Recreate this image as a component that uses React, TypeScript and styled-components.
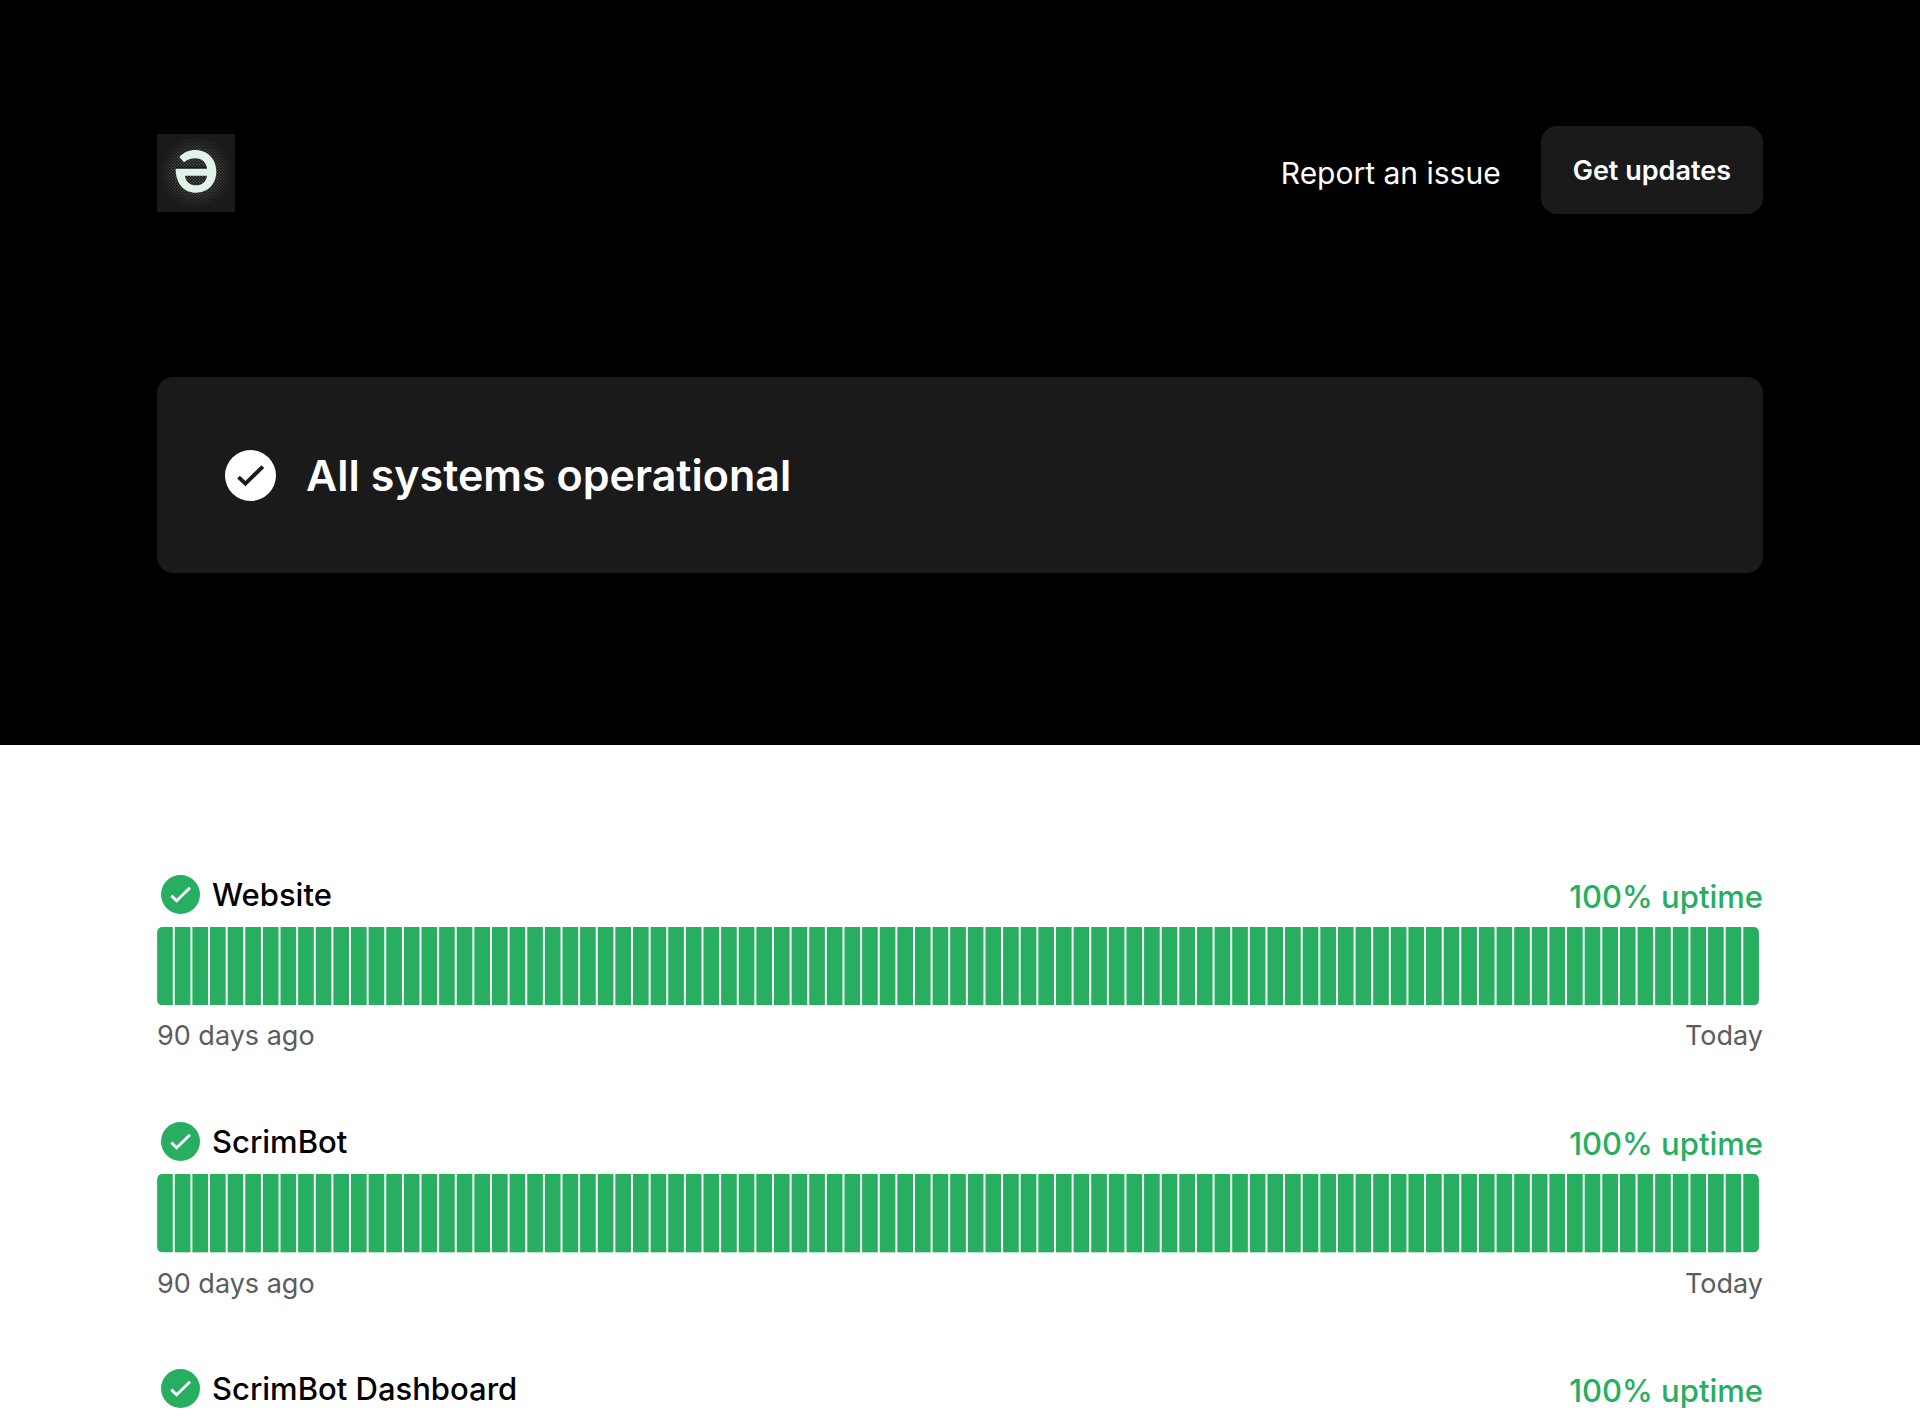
import React from "react";
import styled, { createGlobalStyle } from "styled-components";

const GlobalStyle = createGlobalStyle`
  *, *::before, *::after { box-sizing: border-box; }
  body {
    margin: 0;
    background: #fff;
    color: #000;
    font-family: Inter, "Liberation Sans", sans-serif;
    font-size: 30px;
  }
`;

const Container = styled.div`
  width: 100%;
  max-width: 1654px;
  margin: 0 auto;
  padding: 0 24px;
`;

const Hero = styled.header`
  background: #000;
  color: #fff;
  padding: 126px 0 172px;
`;

const TopBar = styled.div`
  display: flex;
  align-items: center;
  justify-content: space-between;
  margin-bottom: 163px;
`;

const HomeLink = styled.a`
  display: block;
  padding-top: 6px;

  svg { display: block; }
`;

const Actions = styled.nav`
  display: flex;
  align-items: center;
  gap: 40px;
`;

const ReportLink = styled.a`
  padding-top: 6px;
  color: #fff;
  text-decoration: none;
  line-height: 40px;
`;

const UpdatesButton = styled.button`
  height: 88px;
  padding: 0 32px;
  border: 0;
  border-radius: 16px;
  background: #1a1a1a;
  color: #fff;
  font: inherit;
  font-size: 27px;
  font-weight: 600;
  cursor: pointer;
`;

const StatusCard = styled.section`
  display: flex;
  align-items: center;
  gap: 30px;
  min-height: 196px;
  padding: 0 68px;
  border-radius: 16px;
  background: #1a1a1a;
`;

const StatusTitle = styled.h1`
  margin: 0;
  font-size: 43px;
  font-weight: 600;
  line-height: 56px;
`;

const Services = styled.main`
  padding-top: 129px;
`;

const ServiceList = styled.div`
  display: flex;
  flex-direction: column;
  gap: 66px;
`;

const ServiceHead = styled.div`
  display: flex;
  align-items: center;
  justify-content: space-between;
  height: 40px;
`;

const ServiceName = styled.h2`
  display: flex;
  align-items: center;
  gap: 12px;
  margin: 0;
  padding-left: 4px;
  font-size: 31px;
  font-weight: 500;
`;

const Uptime = styled.span`
  padding-top: 4px;
  color: #27ae60;
  font-size: 31px;
  font-weight: 500;
`;

const Chart = styled.svg`
  display: block;
  width: 100%;
  height: auto;
  margin-top: 13px;
`;

const Range = styled.div`
  display: flex;
  justify-content: space-between;
  margin-top: 12px;
  color: #5c5c5c;
  font-size: 27px;
  line-height: 38px;
`;

function Logo() {
  return (
    <svg width="78" height="78" viewBox="0 0 234 234" role="img" aria-label="Home">
      <defs>
        <pattern id="dots" width="9" height="9" patternUnits="userSpaceOnUse">
          <circle cx="2" cy="2" r="2" fill="#757575" />
          <circle cx="6.5" cy="6.5" r="2" fill="#757575" />
        </pattern>
        <radialGradient id="fade">
          <stop offset="0" stopColor="#fff" />
          <stop offset="0.6" stopColor="#fff" stopOpacity="0.75" />
          <stop offset="1" stopColor="#fff" stopOpacity="0" />
        </radialGradient>
        <mask id="glow">
          <circle cx="117" cy="115" r="108" fill="url(#fade)" />
        </mask>
      </defs>
      <rect width="234" height="234" fill="#1a1a1a" />
      <rect width="234" height="234" fill="url(#dots)" mask="url(#glow)" />
      <rect x="56" y="98" width="96" height="7" fill="#1a1a1a" />
      <path
        d="M67 69 C80 55 96 48 115 48 C152 48 178 76 178 112 C178 150 153 176 117 176 C82 176 56 150 56 104 H150 C148 84 134 73 115 73 C101 73 91 77 81 85 Z M84 125 C86 143 99 154 117 154 C135 154 148 143 150 125 Z"
        fill="#e1f2e8"
        fillRule="evenodd"
      />
    </svg>
  );
}

function CheckBadge({ size, fill, mark }: { size: number; fill: string; mark: string }) {
  return (
    <svg width={size} height={size} viewBox="0 0 40 40" aria-hidden="true">
      <circle cx="20" cy="20" r="20" fill={fill} />
      <path d="M10.6 21.2 L16 26.4 L29.7 13" fill="none" stroke={mark} strokeWidth="3" />
    </svg>
  );
}

const DAYS = 91;

const services = [
  { name: "Website", uptime: 100, history: true },
  { name: "ScrimBot", uptime: 100, history: true },
  { name: "ScrimBot Dashboard", uptime: 100, history: false },
];

function UptimeChart({ name }: { name: string }) {
  return (
    <Chart viewBox="0 0 820 40" role="img" aria-label={`${name} uptime history`}>
      {Array.from({ length: DAYS }, (_, day) => {
        if (day === 0) {
          return <path key={day} d="M8 0 H3 Q0 0 0 3 V37 Q0 40 3 40 H8 Z" fill="#27ae60" />;
        }
        if (day === DAYS - 1) {
          return <path key={day} d="M810 0 H815 Q818 0 818 3 V37 Q818 40 815 40 H810 Z" fill="#27ae60" />;
        }
        return <rect key={day} x={day * 9} width="8" height="40" fill="#27ae60" />;
      })}
    </Chart>
  );
}

export default function App() {
  return (
    <>
      <GlobalStyle />
      <Hero>
        <Container>
          <TopBar>
            <HomeLink href="#">
              <Logo />
            </HomeLink>
            <Actions>
              <ReportLink href="#report">Report an issue</ReportLink>
              <UpdatesButton type="button">Get updates</UpdatesButton>
            </Actions>
          </TopBar>
          <StatusCard>
            <CheckBadge size={51} fill="#fff" mark="#1a1a1a" />
            <StatusTitle>All systems operational</StatusTitle>
          </StatusCard>
        </Container>
      </Hero>
      <Services>
        <Container>
          <ServiceList>
            {services.map(({ name, uptime, history }) => (
              <section key={name}>
                <ServiceHead>
                  <ServiceName>
                    <CheckBadge size={39} fill="#27ae60" mark="#fff" />
                    {name}
                  </ServiceName>
                  <Uptime>{uptime}% uptime</Uptime>
                </ServiceHead>
                {history && (
                  <>
                    <UptimeChart name={name} />
                    <Range>
                      <span>90 days ago</span>
                      <span>Today</span>
                    </Range>
                  </>
                )}
              </section>
            ))}
          </ServiceList>
        </Container>
      </Services>
    </>
  );
}
